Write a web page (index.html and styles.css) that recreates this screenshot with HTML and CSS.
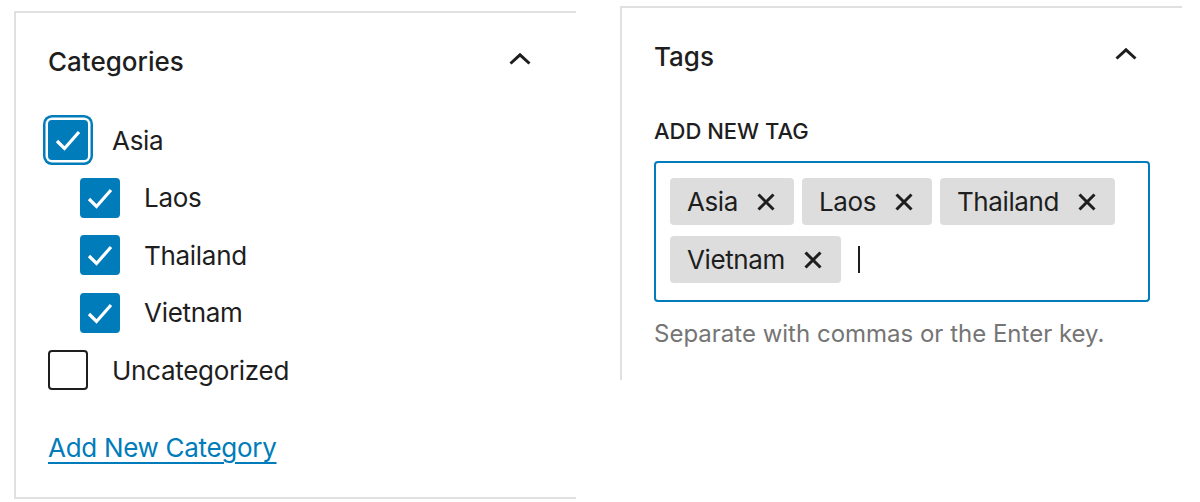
FILE: index.html
```html
<!DOCTYPE html>
<html lang="en">
<head>
    <meta charset="UTF-8">
    <title>Categories and Tags</title>
    <link rel="stylesheet" href="styles.css">
</head>
<body>
  <div class="page">
    <section class="panel panel-cats">
      <div class="panel-head">
        <h2 class="panel-title">Categories</h2>
        <svg class="chevron" width="22" height="12" viewBox="0 0 22 12"><polyline points="1.5,10.5 11,1.8 20.5,10.5" /></svg>
      </div>
      <ul class="cat-list">
        <li class="cat">
          <span class="box checked focused"><svg width="40" height="40" viewBox="0 0 40 40"><polyline points="9,21 16.5,28.5 31,12" /></svg></span>
          <span class="cat-name">Asia</span>
        </li>
        <li class="cat child">
          <span class="box checked"><svg width="40" height="40" viewBox="0 0 40 40"><polyline points="9,21 16.5,28.5 31,12" /></svg></span>
          <span class="cat-name">Laos</span>
        </li>
        <li class="cat child">
          <span class="box checked"><svg width="40" height="40" viewBox="0 0 40 40"><polyline points="9,21 16.5,28.5 31,12" /></svg></span>
          <span class="cat-name">Thailand</span>
        </li>
        <li class="cat child">
          <span class="box checked"><svg width="40" height="40" viewBox="0 0 40 40"><polyline points="9,21 16.5,28.5 31,12" /></svg></span>
          <span class="cat-name">Vietnam</span>
        </li>
        <li class="cat">
          <span class="box"></span>
          <span class="cat-name">Uncategorized</span>
        </li>
      </ul>
      <a class="add-link" href="#">Add New Category</a>
    </section>

    <section class="panel panel-tags">
      <div class="panel-head">
        <h2 class="panel-title">Tags</h2>
        <svg class="chevron" width="22" height="12" viewBox="0 0 22 12"><polyline points="1.5,10.5 11,1.8 20.5,10.5" /></svg>
      </div>
      <div class="field-label">Add New Tag</div>
      <div class="token-field">
        <span class="token"><span>Asia</span><svg width="18" height="18" viewBox="0 0 18 18"><path d="M1.5 1.5 L16.5 16.5 M16.5 1.5 L1.5 16.5" /></svg></span>
        <span class="token"><span>Laos</span><svg width="18" height="18" viewBox="0 0 18 18"><path d="M1.5 1.5 L16.5 16.5 M16.5 1.5 L1.5 16.5" /></svg></span>
        <span class="token"><span>Thailand</span><svg width="18" height="18" viewBox="0 0 18 18"><path d="M1.5 1.5 L16.5 16.5 M16.5 1.5 L1.5 16.5" /></svg></span>
        <span class="token"><span>Vietnam</span><svg width="18" height="18" viewBox="0 0 18 18"><path d="M1.5 1.5 L16.5 16.5 M16.5 1.5 L1.5 16.5" /></svg></span>
        <span class="caret"></span>
      </div>
      <p class="help">Separate with commas or the Enter key.</p>
    </section>
  </div>
</body>
</html>
```

FILE: styles.css
```css
body {
    margin: 0;
    background: #fff;
    color: #1e1e1e;
    font-family: Inter, "Noto Sans", sans-serif;
}
.page {
    display: flex;
    align-items: flex-start;
}
.panel {
    box-sizing: border-box;
    width: 562px;
    border-left: 2px solid #e0e0e0;
    border-top: 2px solid #e0e0e0;
    padding-left: 32px;
}
.panel-cats {
    margin: 11px 0 0 14px;
    height: 488px;
    border-bottom: 2px solid #e0e0e0;
    padding-right: 45px;
}
.panel-tags {
    margin: 6px 0 0 44px;
    height: 374px;
    padding-right: 45px;
}

/* header */
.panel-head {
    display: flex;
    justify-content: space-between;
    align-items: flex-start;
    padding-top: 33px;
}
.panel-title {
    margin: 0;
    font-size: 26px;
    line-height: 32px;
    font-weight: 500;
}
.chevron {
    margin-top: 7px;
}
.chevron polyline {
    fill: none;
    stroke: #1e1e1e;
    stroke-width: 3;
}

/* categories */
.cat-list {
    list-style: none;
    margin: 42px 0 0 0;
    padding: 0;
    display: flex;
    flex-direction: column;
    gap: 17.5px;
}
.cat {
    display: flex;
    align-items: center;
    gap: 24px;
    height: 40px;
    font-size: 26px;
    letter-spacing: -0.3px;
}
.cat.child {
    margin-left: 32px;
}
.box {
    box-sizing: border-box;
    width: 40px;
    height: 40px;
    flex: none;
    border: 2px solid #1e1e1e;
    border-radius: 4px;
    background: #fff;
}
.box.checked {
    border-color: #007cba;
    background: #007cba;
}
.box.focused {
    box-shadow: 0 0 0 2.5px #fff, 0 0 0 5px #007cba;
}
.box svg {
    display: block;
    margin: -2px;
}
.box polyline {
    fill: none;
    stroke: #fff;
    stroke-width: 3.2;
}
.add-link {
    display: inline-block;
    margin-top: 42px;
    font-size: 26px;
    line-height: 32px;
    letter-spacing: -0.3px;
    color: #007cba;
    text-decoration: underline;
    text-decoration-thickness: 2px;
    text-underline-offset: 5px;
}

/* tags */
.field-label {
    margin-top: 44px;
    font-size: 22px;
    line-height: 28px;
    font-weight: 500;
    text-transform: uppercase;
}
.token-field {
    box-sizing: border-box;
    width: 496px;
    margin-top: 16px;
    border: 2px solid #007cba;
    border-radius: 4px;
    padding: 15px 14px 17px 14px;
    display: flex;
    flex-wrap: wrap;
    align-items: center;
    column-gap: 8px;
    row-gap: 11px;
}
.token {
    display: inline-flex;
    align-items: center;
    gap: 19px;
    height: 47px;
    padding: 0 19px 0 17px;
    background: #ddd;
    border-radius: 4px;
    font-size: 26px;
    letter-spacing: -0.4px;
}
.token path {
    fill: none;
    stroke: #1e1e1e;
    stroke-width: 3;
}
.caret {
    width: 2px;
    height: 27px;
    margin-left: 9px;
    background: #1e1e1e;
}
.help {
    margin: 17px 0 0 0;
    font-size: 24px;
    line-height: 30px;
    color: #757575;
}
```
